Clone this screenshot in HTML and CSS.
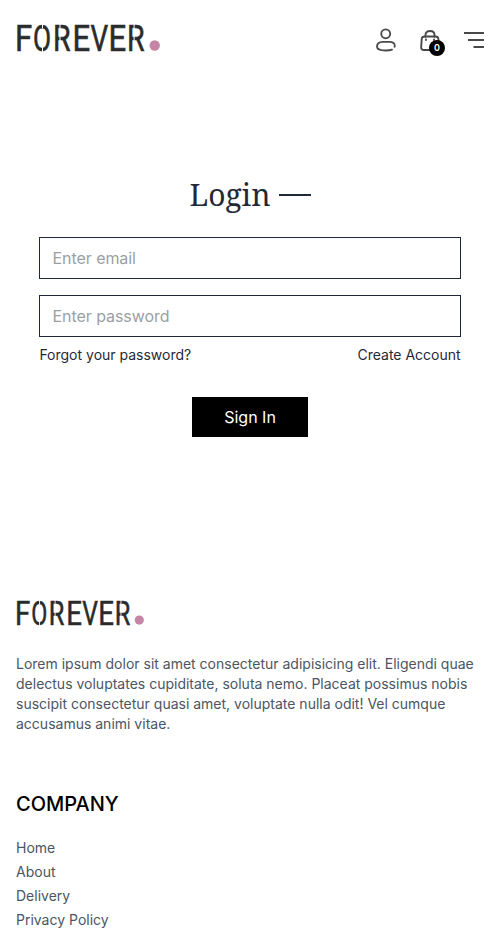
FILE: index.html
```
<!DOCTYPE html>
<html lang="en">
<head>
<meta charset="utf-8">
<meta name="viewport" content="width=device-width, initial-scale=1">
<title>Forever</title>
<link rel="stylesheet" href="styles.css">
</head>
<body>
<header class="navbar">
  <a class="brand"><svg class="logo" viewBox="0 0 144 46" role="img" aria-label="Forever">
    <g id="logo">
      <g class="logo-letters">
        <text transform="translate(-1 36.500) scale(.83 1)">F</text>
        <text transform="translate(17.100 36.500) scale(.7 1)">O</text>
        <text transform="translate(36.900 36.500) scale(.76 1)">R</text>
        <text transform="translate(56.500 36.500) scale(.83 1)">E</text>
        <text transform="translate(74.600 36.500) scale(.74 1)">V</text>
        <text transform="translate(92.500 36.500) scale(.83 1)">E</text>
        <text transform="translate(111 36.500) scale(.76 1)">R</text>
      </g>
      <path class="logo-cuts" d="M26.500 8v6M26.500 33v6M44 8v8M44 22v8M118.100 8v8M118.100 22v8"/>
      <circle class="logo-dot" cx="138.700" cy="31.500" r="5.200"/>
    </g>
  </svg></a>
  <nav class="actions">
    <svg class="user-icon" viewBox="0 0 21 24"><circle cx="10.200" cy="5.500" r="4.700"/><path d="M19.500 19.200C20.500 15.500 17.500 14 14 14H6.600C3.200 14 1 16.100 1 18.800 1 22.200 5 23 10.300 23 13 23 15 22.800 16.800 22.100"/></svg>
    <div class="cart">
      <svg class="bag-icon" viewBox="0 0 20 24"><path d="M5.500 9V7C5.500 4.500 7.400 3 10 3s4.500 1.500 4.500 4v2M18.700 14l-.3-3Q18.200 8.500 15.500 8.500h-11Q2 8.500 1.700 11L1.200 18.500Q.8 22 4 22h9"/><path d="M6 11.500v.6M14 11.500v.6"/></svg>
      <span class="badge">0</span>
    </div>
    <svg class="menu-icon" viewBox="0 0 20 16"><path d="M0 1h20M4 8h16M9.500 15h10.500"/></svg>
  </nav>
</header>
<form class="login">
  <div class="heading"><h1>Login</h1><span class="rule"></span></div>
  <input type="email" placeholder="Enter email">
  <input type="password" placeholder="Enter password">
  <div class="links"><span>Forgot your password?</span><span>Create Account</span></div>
  <button type="button">Sign In</button>
</form>
<footer class="footer">
  <svg class="logo logo-small" viewBox="0 0 144 46" role="img" aria-label="Forever"><use href="#logo"/></svg>
  <p class="about">Lorem ipsum dolor sit amet consectetur adipisicing elit. Eligendi quae delectus voluptates cupiditate, soluta nemo. Placeat possimus nobis suscipit consectetur quasi amet, voluptate nulla odit! Vel cumque accusamus animi vitae.</p>
  <h2>COMPANY</h2>
  <ul>
    <li>Home</li>
    <li>About</li>
    <li>Delivery</li>
    <li>Privacy Policy</li>
  </ul>
</footer>
</body>
</html>
```
FILE: styles.css
```
* { box-sizing: border-box; margin: 0; padding: 0; }
body { background: #fff; font-family: Inter, sans-serif; font-size: 16px; line-height: 24px; color: #1f2937; }
.navbar { display: flex; justify-content: space-between; align-items: center; height: 80px; padding: 0 16px; }
.brand { display: flex; }
.logo { display: block; width: 144px; height: 46px; margin-bottom: 6px; overflow: visible; }
.logo-letters { font: 400 37.500px Roboto, sans-serif; fill: #2b2b2b; stroke: #2b2b2b; stroke-width: .6; }
.logo-cuts { fill: none; stroke: #fff; stroke-width: 1; }
.logo-dot { fill: #c586a5; }
.actions { display: flex; align-items: center; gap: 24px; }
.actions svg { display: block; fill: none; stroke: #484848; stroke-width: 1.900; stroke-linecap: round; stroke-linejoin: round; }
.user-icon { width: 20px; height: 24px; }
.cart { position: relative; }
.bag-icon { width: 20px; height: 24px; }
.badge { position: absolute; right: -5px; bottom: -4px; width: 16px; height: 16px; border-radius: 50%; background: #000; color: #fff; font-size: 9px; font-weight: 600; line-height: 16px; text-align: center; }
.actions .menu-icon { width: 20px; height: 16px; stroke-linecap: butt; }
.login { display: flex; flex-direction: column; align-items: center; gap: 16px; width: 422px; margin: 91px auto 0; }
.heading { display: flex; align-items: center; gap: 8px; height: 48px; margin-bottom: 2px; }
h1 { padding-bottom: 2px; font: 400 30px/45px "Noto Serif", "Droid Serif", "DejaVu Serif", serif; }
.rule { width: 32px; height: 2px; background: #1f2937; }
input { width: 100%; height: 42px; padding: 8px 12.500px; border: 1px solid #1f2937; border-radius: 0; background: #fff; font: 400 16px/24px Inter, sans-serif; letter-spacing: -.06px; outline: 0; }
input::placeholder { color: #9a9fa6; opacity: 1; }
.links { display: flex; justify-content: space-between; width: 100%; margin-top: -8px; padding: 0 .4px; font-size: 14px; line-height: 20px; }
button { width: 116px; height: 40px; margin-top: 16px; border: 0; background: #000; color: #fff; font: 400 16px/24px Inter, sans-serif; }
.footer { margin-top: 155px; padding: 0 16px; color: #4b5563; font-size: 14px; line-height: 20px; }
.logo-small { width: 128px; height: 41px; margin: 0; }
.about { margin-top: 21px; }
h2 { margin-top: 56px; color: #000; font-size: 20px; font-weight: 500; line-height: 28px; }
ul { display: flex; flex-direction: column; gap: 4px; margin-top: 20px; list-style: none; }
```
